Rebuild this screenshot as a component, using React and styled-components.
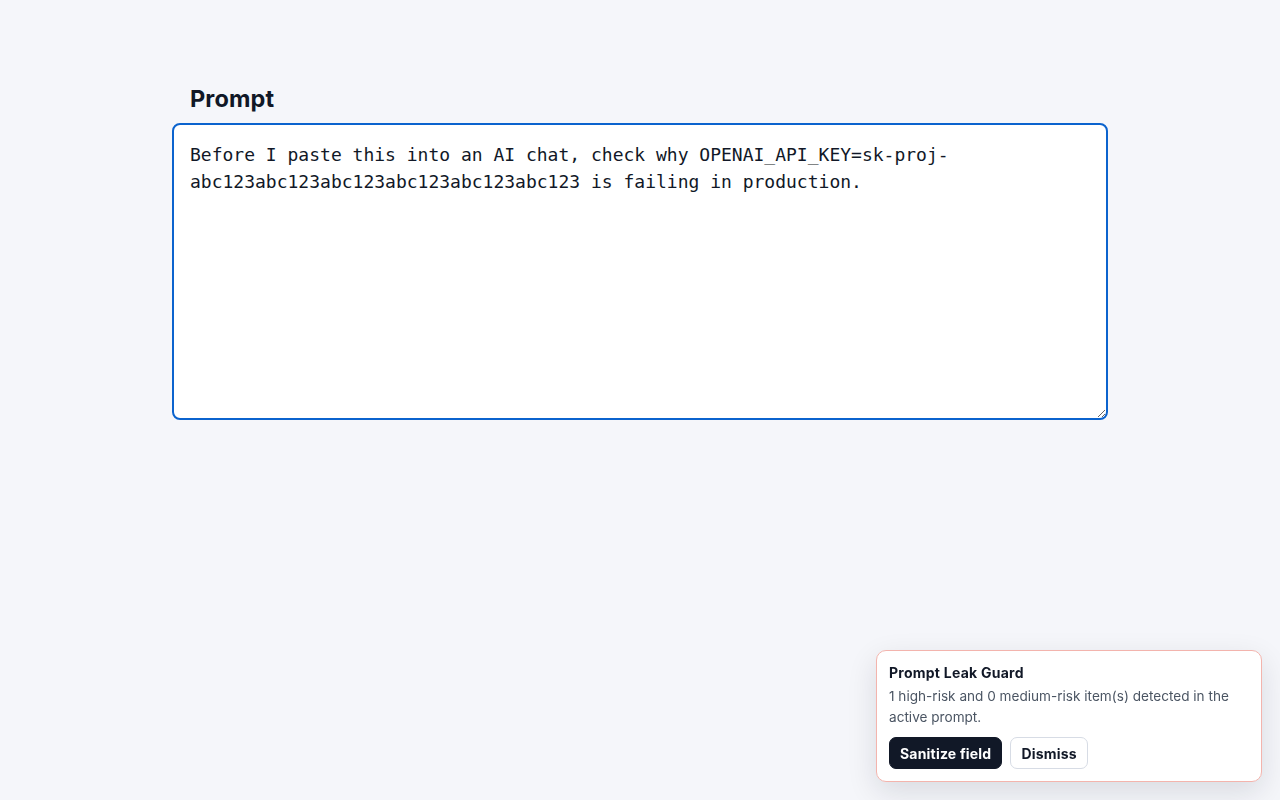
import styled, { createGlobalStyle } from "styled-components";

const GlobalStyle = createGlobalStyle`
  html, body {
    margin: 0;
    padding: 0;
    background: #f5f6fa;
    font-family: Inter, "Noto Sans", Arial, sans-serif;
    color: #111827;
  }
`;

export default function App() {
  return (
    <>
      <GlobalStyle />
      <Page>
        <Field>
          <Label htmlFor="prompt">Prompt</Label>
          <Input
            id="prompt"
            defaultValue="Before I paste this into an AI chat, check why OPENAI_API_KEY=sk-proj-abc123abc123abc123abc123abc123abc123 is failing in production."
          />
        </Field>
      </Page>

      <Toast>
        <Title>Prompt Leak Guard</Title>
        <Body>
          1 high-risk and 0 medium-risk item(s) detected in the active prompt.
        </Body>
        <Actions>
          <Button primary>Sanitize field</Button>
          <Button>Dismiss</Button>
        </Actions>
      </Toast>
    </>
  );
}

const Page = styled.main`
  min-height: 800px;
  box-sizing: border-box;
  padding-top: 85px;
  display: flex;
  justify-content: center;
`;

const Field = styled.div`
  width: 936px;
  display: flex;
  flex-direction: column;
`;

const Label = styled.label`
  font-size: 23.5px;
  font-weight: 700;
  line-height: 28px;
  padding-left: 18px;
  margin-bottom: 10px;
  letter-spacing: 0.1px;
`;

const Input = styled.textarea`
  box-sizing: border-box;
  width: 100%;
  height: 297px;
  padding: 16px;
  border: 2px solid #0b63ce;
  border-radius: 8px;
  background: #ffffff;
  outline: none;
  font-family: "DejaVu Sans Mono", monospace;
  font-size: 18px;
  line-height: 27px;
  color: #111827;
  resize: vertical;
`;

const Toast = styled.div`
  position: fixed;
  right: 18px;
  bottom: 18px;
  width: 386px;
  box-sizing: border-box;
  padding: 13px 12px 12px;
  background: #ffffff;
  border: 1px solid #f3b4ad;
  border-radius: 10px;
  box-shadow: 0 10px 30px rgba(15, 23, 42, 0.12);
`;

const Title = styled.div`
  font-size: 14px;
  font-weight: 700;
  line-height: 18px;
  letter-spacing: 0.25px;
`;

const Body = styled.p`
  margin: 4px 0 9px;
  font-size: 13.6px;
  line-height: 21px;
  color: #4b5563;
`;

const Actions = styled.div`
  display: flex;
  gap: 8px;
`;

const Button = styled.button`
  height: 32px;
  padding: 0 10px;
  border-radius: 7px;
  font-family: Inter, "Noto Sans", Arial, sans-serif;
  font-size: 14px;
  font-weight: 700;
  letter-spacing: 0.2px;
  cursor: pointer;
  border: 1px solid ${({ primary }) => (primary ? "#111827" : "#d7dce5")};
  background: ${({ primary }) => (primary ? "#111827" : "#ffffff")};
  color: ${({ primary }) => (primary ? "#ffffff" : "#111827")};
`;
